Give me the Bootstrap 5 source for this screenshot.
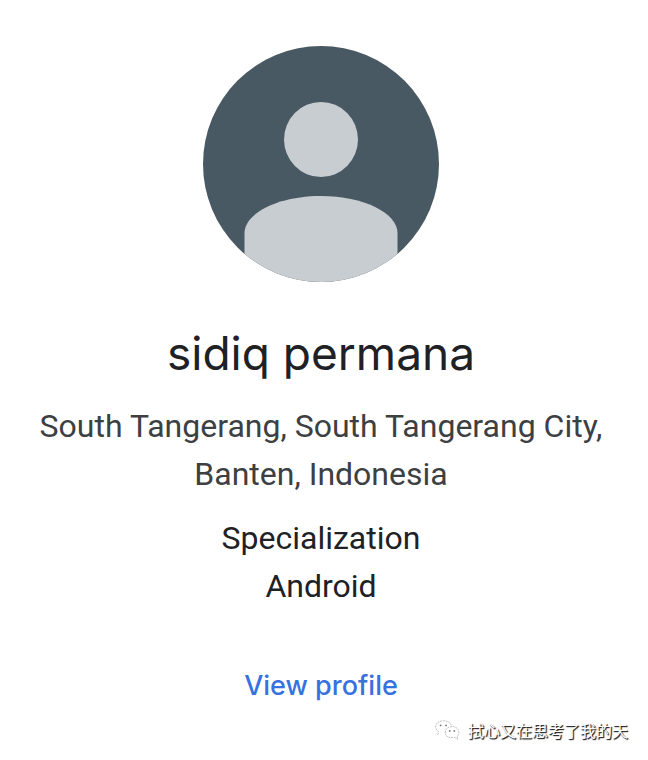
<!DOCTYPE html>
<html lang="en">
<head>
<meta charset="utf-8">
<meta name="viewport" content="width=device-width, initial-scale=1">
<title>sidiq permana</title>
<link rel="stylesheet" href="https://cdn.jsdelivr.net/npm/bootstrap@5.3.0/dist/css/bootstrap.min.css">
<style>
body{background:#fff;color:#202124;font-family:Roboto,"Liberation Sans",sans-serif;font-size:32px;line-height:48px}
.profile{padding:46px 32px 0 26px}
.avatar{width:236px;height:236px}
.person{font-family:Inter,sans-serif;font-size:46px;line-height:60px;margin-top:41px;font-weight:400}
.place{color:#3c4043;margin-top:19px}
.skill{margin-top:16px}
.view-link{font-family:Inter,sans-serif;font-weight:500;font-size:27px;line-height:48px;color:#3871e0;margin-top:52px}
.signature{font-family:"Noto Sans CJK SC",sans-serif;font-size:16px;line-height:24px;color:#fff;text-shadow:1px 1px 1px #222,1px 1px 1px #555;padding-right:20px;margin-top:8px}
</style>
</head>
<body>
<main class="profile text-center">
<svg class="avatar rounded-circle d-block mx-auto" viewBox="0 0 236 236" role="img" aria-label="Profile picture">
<path fill="#485963" d="M0 0h236v236H0z"/><ellipse cx="118" cy="93.500" rx="37" ry="37.500" fill="#c8cdd1"/><path fill="#c8cdd1" d="M41.500 240v-53c0-20 34-37 76.500-37s76.500 17 76.500 37v53z"/>
</svg>
<h1 class="person mb-0">sidiq permana</h1>
<p class="place mb-0">South Tangerang, South Tangerang City, Banten, Indonesia</p>
<dl class="skill mb-0"><dt class="fw-normal">Specialization</dt><dd class="mb-0">Android</dd></dl>
<a class="view-link d-inline-block text-decoration-none" href="#profile">View profile</a>
</main>
<footer class="signature d-flex justify-content-end align-items-center gap-2" lang="zh">
<svg width="26" height="22" viewBox="0 0 28 24" aria-hidden="true"><g fill="#fff" stroke="#999" stroke-width=".7" stroke-dasharray="2 1"><path d="M4 17l1-3C-1 10 1 2 10 2c6 0 9 3 9 7"/><path d="M12 15c0-9 15-9 15 0 0 2-1 3-2 4l1 3-4-2c-6 1-10-1-10-5z"/></g><g fill="#777"><circle cx="7" cy="7" r="1"/><circle cx="13" cy="7" r="1"/><circle cx="17" cy="13" r="1"/><circle cx="22" cy="13" r="1"/></g></svg>
<span class="text-nowrap">拭心又在思考了我的天</span>
</footer>
<script src="https://cdn.jsdelivr.net/npm/bootstrap@5.3.0/dist/js/bootstrap.bundle.min.js"></script>
</body>
</html>
